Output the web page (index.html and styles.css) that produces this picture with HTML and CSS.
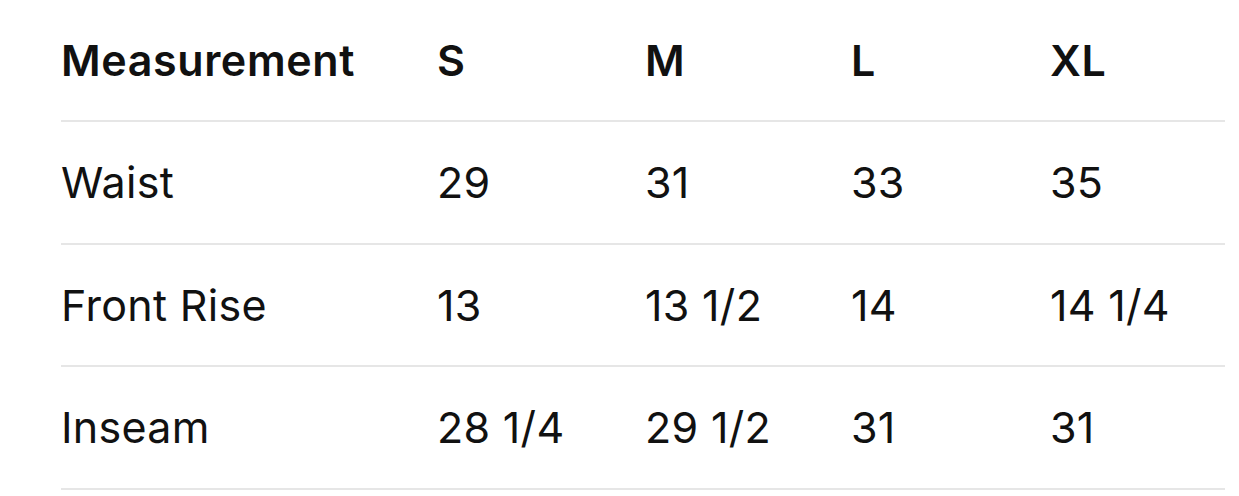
FILE: index.html
```html
<!DOCTYPE html>
<html>
<head>
<meta charset="utf-8">
<link rel="stylesheet" href="styles.css">
</head>
<body>
<div class="table">
  <div class="row head">
    <div class="cell">Measurement</div>
    <div class="cell">S</div>
    <div class="cell">M</div>
    <div class="cell">L</div>
    <div class="cell">XL</div>
  </div>
  <div class="row">
    <div class="cell">Waist</div>
    <div class="cell">29</div>
    <div class="cell">31</div>
    <div class="cell">33</div>
    <div class="cell">35</div>
  </div>
  <div class="row">
    <div class="cell">Front Rise</div>
    <div class="cell">13</div>
    <div class="cell">13 1/2</div>
    <div class="cell">14</div>
    <div class="cell">14 1/4</div>
  </div>
  <div class="row">
    <div class="cell">Inseam</div>
    <div class="cell">28 1/4</div>
    <div class="cell">29 1/2</div>
    <div class="cell">31</div>
    <div class="cell">31</div>
  </div>
</div>
</body>
</html>
```
FILE: styles.css
```css
html, body {
  margin: 0;
  padding: 0;
  background: #ffffff;
}
body {
  font-family: Inter, "Liberation Sans", sans-serif;
  color: #111111;
  font-size: 43px;
  letter-spacing: 0.3px;
}
.table {
  margin-left: 61px;
  width: 1164px;
}
.row {
  display: grid;
  grid-template-columns: 376px 208px 206px 199px 1fr;
  align-items: center;
  height: 120.6px;
  border-bottom: 2px solid #e6e6e6;
}
.row.head {
  height: 120px;
  font-weight: 600;
  letter-spacing: 0.6px;
}
.cell {
  white-space: nowrap;
}
```
